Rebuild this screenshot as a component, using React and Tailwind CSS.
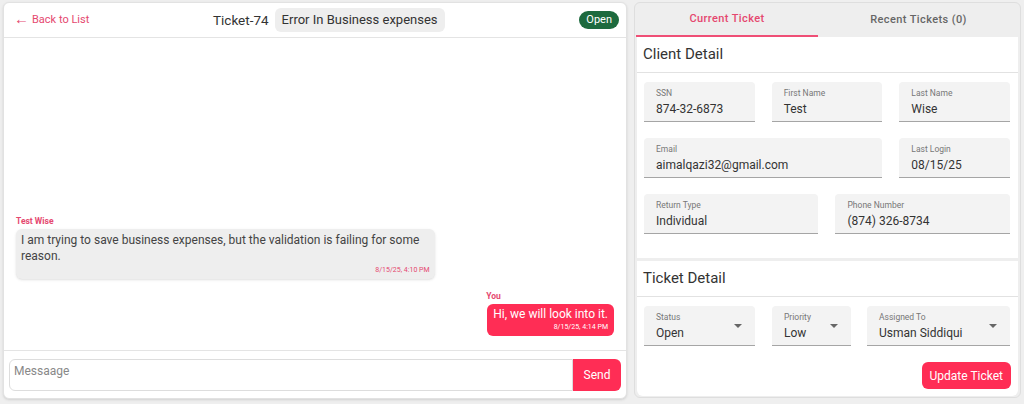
import React from "react";

const font = { fontFamily: "Roboto, 'Liberation Sans', sans-serif" };

export default function App() {
    return (
        <div className="w-[1024px] h-[404px] bg-[#efefef] flex gap-[7px] pl-[3px] pt-[2px] pr-[3px] pb-[5px]" style={font}>
            <ChatPanel />
            <TicketPanel />
        </div>
    );
}

function ChatPanel() {
    return (
        <div className="w-[624px] h-[397px] bg-white rounded-md border border-[#e2e2e2] shadow-sm flex flex-col">
            {/* HEADER */}
            <div className="h-[35px] border-b border-[#e4e4e4] flex items-center px-[10px]">
                <div className="text-[11px] text-[#e5486f] flex items-center gap-[3px] w-[199px]">
                    <span className="text-[15px] leading-none mt-[-2px]">&#x2190;</span>
                    <span>Back to List</span>
                </div>
                <span className="text-[13.5px] text-[#333]">Ticket-74</span>
                <span className="ml-[6px] bg-[#eeeeee] rounded-md px-[7px] h-[24px] flex items-center text-[13px] text-[#333]">
                    Error In Business expenses
                </span>
                <span className="ml-auto mr-[-3px] bg-[#1d6a3e] text-white text-[11px] rounded-full px-[7px] h-[18px] flex items-center">
                    Open
                </span>
            </div>

            {/* MESSAGES */}
            <div className="flex-1 flex flex-col justify-end px-[12px] pb-[14px]">
                <div className="self-start w-[70%]">
                    <div className="text-[8.5px] font-bold text-[#e5486f] mb-[1px]">Test Wise</div>
                    <div className="bg-[#eeeeee] rounded-md px-[5px] pt-[3px] pb-[4px] shadow-sm">
                        <p className="text-[12px] leading-[16px] text-[#444]">
                            I am trying to save business expenses, but the validation is failing for some reason.
                        </p>
                        <p className="text-[7px] leading-[10px] text-[#e5486f] text-right mt-[1px]">8/15/25, 4:10 PM</p>
                    </div>
                </div>

                <div className="self-end mt-[11px] max-w-[70%]">
                    <div className="text-[8.5px] font-bold text-[#e5486f] mb-[1px] ml-[-1px]">You</div>
                    <div className="bg-[#ff2d55] rounded-md px-[6px] pt-[2px] pb-[4px]">
                        <p className="text-[12px] leading-[16px] text-white">Hi, we will look into it.</p>
                        <p className="text-[7px] text-white text-right">8/15/25, 4:14 PM</p>
                    </div>
                </div>
            </div>

            {/* INPUT */}
            <div className="border-t border-[#e4e4e4] h-[48px] flex pt-[8px] px-[5px]">
                <div className="flex-1 h-[32px] border border-[#dddddd] rounded-l-md px-[4px] pt-[2px] text-[12px] text-[#888]">
                    Messaage
                </div>
                <button className="w-[48px] h-[32px] bg-[#ff2d55] text-white text-[12px] rounded-r-md">
                    Send
                </button>
            </div>
        </div>
    );
}

function Field({ label, value, span }) {
    return (
        <div className={`${span} h-[40px] bg-[#f3f3f3] rounded-t border-b border-[#a5a5a5] px-[12px] pt-[5px]`}>
            <div className="text-[8.5px] text-[#777] leading-[12px]">{label}</div>
            <div className="text-[12px] text-[#333] leading-[18px] mt-[1px]">{value}</div>
        </div>
    );
}

function Select({ label, value, w }) {
    return (
        <div className={`${w} h-[40px] bg-[#f3f3f3] rounded-t border-b border-[#a5a5a5] pl-[12px] pr-[13px] pt-[5px] flex items-start`}>
            <div className="flex-1">
                <div className="text-[8.5px] text-[#777] leading-[12px]">{label}</div>
                <div className="text-[12px] text-[#333] leading-[18px] mt-[1px]">{value}</div>
            </div>
            <svg width="8" height="4" viewBox="0 0 8 4" className="mt-[13px]">
                <path d="M0 0 L8 0 L4 4 Z" fill="#666" />
            </svg>
        </div>
    );
}

function TicketPanel() {
    return (
        <div className="w-[387px] h-[396px] bg-[#eeeeee] rounded-md border border-[#dedede] flex flex-col px-[1px]">
            {/* TABS */}
            <div className="h-[34px] flex text-[11px] font-medium tracking-[0.4px]">
                <div className="w-[182px] flex items-center justify-center text-[#e5486f] border-b-2 border-[#ef4f76]">
                    Current Ticket
                </div>
                <div className="flex-1 flex items-center justify-center text-[#666]">
                    Recent Tickets (0)
                </div>
            </div>

            {/* CLIENT DETAIL */}
            <div className="bg-white h-[221px] mx-[1px]">
                <div className="h-[36px] border-b border-[#e2e2e2] flex items-center px-[6px] text-[15px] text-[#333]">
                    Client Detail
                </div>
                <div className="grid grid-cols-6 gap-x-[17px] gap-y-[16px] pl-[7px] pr-[8px] pt-[9px]">
                    <Field span="col-span-2" label="SSN" value="874-32-6873" />
                    <Field span="col-span-2" label="First Name" value="Test" />
                    <Field span="col-span-2" label="Last Name" value="Wise" />
                    <Field span="col-span-4" label="Email" value="aimalqazi32@gmail.com" />
                    <Field span="col-span-2" label="Last Login" value="08/15/25" />
                    <Field span="col-span-3" label="Return Type" value="Individual" />
                    <Field span="col-span-3" label="Phone Number" value="(874) 326-8734" />
                </div>
            </div>

            {/* TICKET DETAIL */}
            <div className="bg-white flex-1 mt-[3px] mx-[1px] mb-[1px] rounded-b-md">
                <div className="h-[36px] border-b border-[#e2e2e2] flex items-center px-[6px] text-[15px] text-[#333]">
                    Ticket Detail
                </div>
                <div className="flex pl-[7px] pr-[8px] pt-[9px]">
                    <Select w="w-[111px]" label="Status" value="Open" />
                    <div className="w-[17px]" />
                    <Select w="w-[79px]" label="Priority" value="Low" />
                    <div className="w-[16px]" />
                    <Select w="flex-1" label="Assigned To" value="Usman Siddiqui" />
                </div>
                <div className="flex justify-end pr-[7px] pt-[16px]">
                    <button className="h-[27px] px-[8px] bg-[#ff2d55] text-white text-[12px] rounded-md">
                        Update Ticket
                    </button>
                </div>
            </div>
        </div>
    );
}
